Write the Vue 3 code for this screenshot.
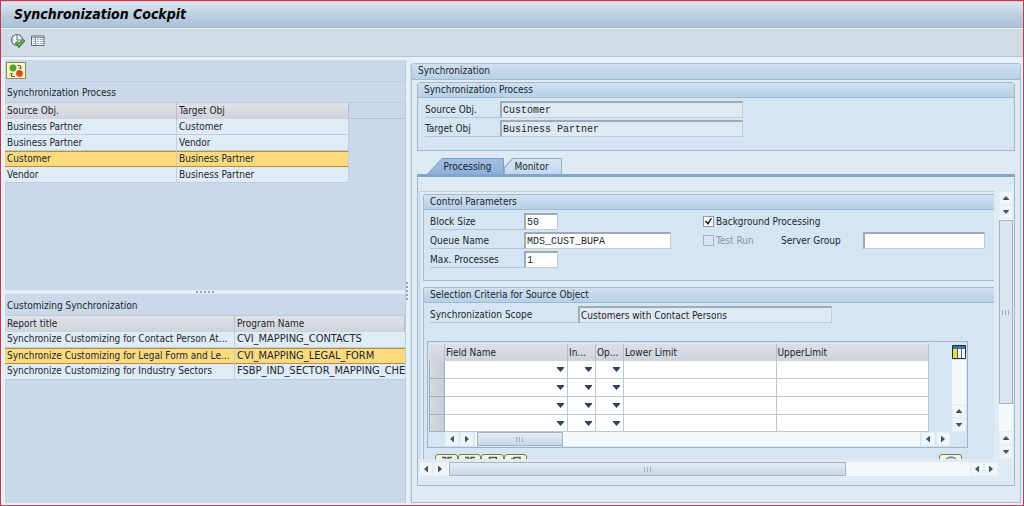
<script setup>
import { ref } from 'vue'

const objects = [
  ['Business Partner', 'Customer'],
  ['Business Partner', 'Vendor'],
  ['Customer', 'Business Partner'],
  ['Vendor', 'Business Partner'],
]
const reports = [
  ['Synchronize Customizing for Contact Person At...', 'CVI_MAPPING_CONTACTS'],
  ['Synchronize Customizing for Legal Form and Le...', 'CVI_MAPPING_LEGAL_FORM'],
  ['Synchronize Customizing for Industry Sectors', 'FSBP_IND_SECTOR_MAPPING_CHEC'],
]
const selectedObject = ref(2)
const selectedReport = ref(1)
const tab = ref('Processing')
const source = ref('Customer')
const target = ref('Business Partner')
const blockSize = ref('50')
const queue = ref('MDS_CUST_BUPA')
const maxProc = ref('1')
const background = ref(true)
const testRun = ref(false)
const serverGroup = ref('')
const scope = ref('Customers with Contact Persons')
</script>

<template>
  <div class="app">
    <header class="titlebar"><h1>Synchronization Cockpit</h1></header>
    <div class="toolbar">
      <button class="tool" aria-label="Execute">
        <svg width="16" height="16" viewBox="0 0 16 16">
          <circle cx="7" cy="7" r="5.5" fill="#f4f8fa" stroke="#5d6a74" stroke-width="1.2" />
          <path d="M7 2v5h4M7 11v1M2.500 7h1" fill="none" stroke="#5d6a74" />
          <path d="M6 9l3 3.500L14 6.500" fill="none" stroke="#3f7f34" stroke-width="3.600" />
          <path d="M6.500 9.500L9 12l4.500-5" fill="none" stroke="#79b866" stroke-width="1.600" />
        </svg>
      </button>
      <button class="tool" aria-label="Layout">
        <svg width="14" height="12" viewBox="0 0 14 12">
          <path d="M.5 1h12.500v9.500H.5z" fill="#eef4f8" stroke="#5f6c76" />
          <path d="M1 2.500h12" stroke="#8296a6" />
          <path d="M4.500 2v8" stroke="#8a98a4" />
          <path d="M2 4.500h1.500M2 6.500h1.500M2 8.500h1.500M6 4.500h2M9 4.500h3M6 6.500h2M9 6.500h3M6 8.500h2M9 8.500h3" stroke="#9fb0bd" />
        </svg>
      </button>
    </div>

    <main class="body">
      <div class="left">
        <section class="pane upper">
          <div class="panebar">
            <button class="switch" aria-label="Switch direction">
              <svg width="17" height="14" viewBox="0 0 17 14">
                <circle cx="5" cy="4" r="3.400" fill="#5aa02c" />
                <circle cx="11.500" cy="9.500" r="3.400" fill="#d2551e" />
                <path d="M9.500 1.500h3v3M11 3.500l1.500 1.500L14 3.500M7 12.500H3.500v-3M2 10.500L3.500 9 5 10.500" fill="none" stroke="#555" />
              </svg>
            </button>
          </div>
          <h2 class="caption">Synchronization Process</h2>
          <div class="headband">
            <table class="list objects">
              <thead><tr><th>Source Obj.</th><th>Target Obj</th></tr></thead>
              <tbody>
                <tr v-for="(r, i) in objects" :key="i" :class="{ on: i === selectedObject }" @click="selectedObject = i">
                  <td v-for="(c, k) in r" :key="k">{{ c }}</td>
                </tr>
              </tbody>
            </table>
          </div>
        </section>
        <div class="split-h"><i v-for="n in 5" :key="n"></i></div>
        <section class="pane lower">
          <h2 class="caption">Customizing Synchronization</h2>
          <table class="list reports">
            <thead><tr><th>Report title</th><th>Program Name</th></tr></thead>
            <tbody>
              <tr v-for="(r, i) in reports" :key="i" :class="{ on: i === selectedReport }" @click="selectedReport = i">
                <td>{{ r[0] }}</td><td class="clip">{{ r[1] }}</td>
              </tr>
            </tbody>
          </table>
        </section>
      </div>

      <div class="split-v"><i v-for="n in 5" :key="n"></i></div>

      <section class="group outer">
        <h2 class="ghead">Synchronization</h2>
        <div class="outer-body">
          <section class="group process">
            <h3 class="ghead">Synchronization Process</h3>
            <div class="fields">
              <label class="lbl" for="src">Source Obj.</label>
              <input id="src" v-model="source" class="box ro mono" readonly />
              <label class="lbl" for="tgt">Target Obj</label>
              <input id="tgt" v-model="target" class="box ro mono" readonly />
            </div>
          </section>

          <div class="tabs" role="tablist">
            <button
              v-for="t in ['Processing', 'Monitor']" :key="t" role="tab" class="tab"
              :class="{ active: tab === t }" :aria-selected="tab === t" @click="tab = t"
            ><span>{{ t }}</span></button>
          </div>

          <div class="tabpanel">
            <div class="view">
              <section class="group open params">
                <h3 class="ghead">Control Parameters</h3>
                <div class="param-grid">
                  <div class="fields narrow">
                    <label class="lbl" for="bs">Block Size</label>
                    <input id="bs" v-model="blockSize" class="box mono short" />
                    <label class="lbl" for="qn">Queue Name</label>
                    <input id="qn" v-model="queue" class="box mono" />
                    <label class="lbl" for="mp">Max. Processes</label>
                    <input id="mp" v-model="maxProc" class="box mono short" />
                  </div>
                  <div class="options">
                    <label class="check"><input v-model="background" type="checkbox" /><span>Background Processing</span></label>
                    <div class="optrow">
                      <label class="check off"><input v-model="testRun" type="checkbox" disabled /><span>Test Run</span></label>
                      <label class="plain" for="sg">Server Group</label>
                      <input id="sg" v-model="serverGroup" class="box mono" />
                    </div>
                  </div>
                </div>
              </section>

              <section class="group open criteria">
                <h3 class="ghead">Selection Criteria for Source Object</h3>
                <div class="fields wide">
                  <label class="lbl" for="sc">Synchronization Scope</label>
                  <input id="sc" v-model="scope" class="box ro" readonly />
                </div>

                <div class="gridbox">
                  <div class="gridtop">
                    <table class="grid">
                      <colgroup><col class="c0" /><col class="c1" /><col class="c2" /><col class="c2" /><col /><col /></colgroup>
                      <thead>
                        <tr><th></th><th>Field Name</th><th>In...</th><th>Op...</th><th>Lower Limit</th><th>UpperLimit</th></tr>
                      </thead>
                      <tbody>
                        <tr v-for="r in 4" :key="r">
                          <td class="sel"></td>
                          <td v-for="c in ['Field name', 'Include', 'Option']" :key="c" class="dd">
                            <select :aria-label="c"><option></option></select>
                          </td>
                          <td><input aria-label="Lower limit" /></td>
                          <td><input aria-label="Upper limit" /></td>
                        </tr>
                      </tbody>
                    </table>
                    <div class="vbar inner">
                      <button class="config" aria-label="Configure columns">
                        <svg width="14" height="14" viewBox="0 0 14 14">
                          <path d="M.5.5h13v13H.5z" fill="#fff" stroke="#1d2b3c" />
                          <path d="M1 1h12v3H1z" fill="#3c6fb0" />
                          <path d="M1 4h4v9H1z" fill="#f3df25" />
                          <path d="M5.500 3v10M9.500 3v10" stroke="#3c5f90" />
                        </svg>
                      </button>
                      <div class="track"></div>
                      <button class="arrow up" aria-label="Up"></button>
                      <button class="arrow down" aria-label="Down"></button>
                    </div>
                  </div>
                  <div class="hbar inner">
                    <button class="arrow left-a" aria-label="Left"></button>
                    <button class="arrow right-a" aria-label="Right"></button>
                    <div class="track"><div class="thumb"><b></b></div></div>
                    <button class="arrow left-a" aria-label="Left"></button>
                    <button class="arrow right-a" aria-label="Right"></button>
                  </div>
                </div>

                <div class="actions">
                  <button aria-label="Select all"><svg width="12" height="8" viewBox="0 0 12 8"><path d="M1 2.500h3.500V7M7 7V2.500h4" fill="none" stroke="#555" stroke-width="1.500" /></svg></button>
                  <button aria-label="Deselect all"><svg width="12" height="8" viewBox="0 0 12 8"><path d="M1 2.500h3.500V7M7 7V2.500h4" fill="none" stroke="#555" stroke-width="1.500" /></svg></button>
                  <button aria-label="Insert row"><svg width="12" height="8" viewBox="0 0 12 8"><path d="M2.500 8V2.500h7V8" fill="none" stroke="#555" stroke-width="1.500" /></svg></button>
                  <button aria-label="Delete row"><svg width="12" height="8" viewBox="0 0 12 8"><path d="M1 4h3V2.500h6V8" fill="none" stroke="#555" stroke-width="1.500" /></svg></button>
                  <button class="last" aria-label="Check"><svg width="14" height="8" viewBox="0 0 14 8"><ellipse cx="7" cy="6" rx="6" ry="4" fill="#b9d3ee" stroke="#3d6a96" /></svg></button>
                </div>
              </section>
            </div>

            <div class="vbar main-v">
              <button class="arrow up" aria-label="Up"></button>
              <button class="arrow down" aria-label="Down"></button>
              <div class="track"><div class="thumb"><b></b></div></div>
              <button class="arrow up" aria-label="Up"></button>
              <button class="arrow down" aria-label="Down"></button>
            </div>
            <div class="hbar main-h">
              <button class="arrow left-a" aria-label="Left"></button>
              <button class="arrow right-a" aria-label="Right"></button>
              <div class="track"><div class="thumb"><b></b></div></div>
              <button class="arrow left-a" aria-label="Left"></button>
              <button class="arrow right-a" aria-label="Right"></button>
            </div>
          </div>
        </div>
      </section>
    </main>
  </div>
</template>

<style>
body { background: #e6f0f9; }
</style>

<style scoped>
* { box-sizing: border-box; }
.app {
  min-height: 100vh;
  display: flex;
  flex-direction: column;
  border: 1px solid #c03a50;
  background: #e6f0f9;
  color: #1c2530;
  font: 10px/14px "DejaVu Sans Condensed", "DejaVu Sans", sans-serif;
}
h1, h2, h3 { margin: 0; font-weight: normal; font-size: inherit; }
button, input, select { font: inherit; color: inherit; margin: 0; padding: 0; border: 0; border-radius: 0; background: none; min-width: 0; }
.titlebar {
  height: 27px;
  padding: 0 13px;
  border-top: 1px solid #ecc0c8;
  border-bottom: 1px solid #a6bac8;
  background: linear-gradient(#dbe6f3, #bdd0df 50%, #aac1da);
}
.titlebar h1 { color: #000; font: italic bold 14px/24px "DejaVu Sans Condensed", "DejaVu Sans", sans-serif; }
.toolbar {
  height: 29px;
  display: flex;
  align-items: center;
  gap: 4px;
  padding: 0 9px 4px;
  border-top: 1px solid #e8f0f6;
  border-bottom: 1px solid #b8c5cd;
  background: #cfdce6;
}
.tool { display: grid; place-items: center; width: 16px; height: 16px; }

.body { flex: 1; display: grid; grid-template-columns: 400fr 6px 610fr; padding: 3px 2px 2px 4px; }
.body > * { min-width: 0; }
.left { display: flex; flex-direction: column; min-height: 0; }
.pane { background: #c9d9e9; overflow: hidden; }
.upper { flex: 232; }
.lower { flex: 210; padding-top: 1px; }
.panebar { height: 22px; padding: 2px 1px; border-bottom: 1px solid #b9cbdd; }
.switch { display: grid; place-items: center; width: 20px; height: 17px; border: 1px solid #8d8a55; background: #fdf5c4; }
.caption { height: 20px; padding: 3px 2px; line-height: 15px; }
.headband { background: linear-gradient(#b3c3d4, #b3c3d4) 0 15px / 100% 1px no-repeat; border-top: 1px solid #b9cbdd; }
.list { border-collapse: separate; border-spacing: 0; table-layout: fixed; }
.objects { width: 86%; }
.reports { width: 100%; border-top: 1px solid #b9cbdd; }
.reports th:first-child { width: 230px; }
.list th { height: 16px; padding: 0 2px; text-align: left; font-weight: normal; background: linear-gradient(#dfe2e7, #cfd3d9); border-right: 1px solid #b6bec8; }
.list td { height: 16px; padding: 0 2px; line-height: 14px; background: #dfebf6; border-right: 1px solid #c0cfde; border-bottom: 1px solid #bccddd; overflow: hidden; white-space: nowrap; }
.list td.clip { font-size: 11px; padding-right: 0; border-right: 0; }
.list .on td { background: #fcda7e; border-top: 1px solid #c08a3c; border-bottom-color: #c08a3c; }
.split-h { height: 4px; display: flex; justify-content: center; align-items: center; gap: 2px; border-top: 1px solid #e1ebf5; border-bottom: 1px solid #e1ebf5; }
.split-h i, .split-v i { width: 2px; height: 2px; background: #94a3b4; }
.split-v { display: flex; flex-direction: column; align-items: flex-start; justify-content: center; gap: 2px; border-left: 1px solid #b9cbdd; border-right: 1px solid #d2e0ed; padding-top: 18px; }

.group { border: 1px solid #a3b9ce; border-radius: 3px 3px 0 0; background: #d4e5f3; }
.ghead { height: 15px; padding: 0 6px; line-height: 14px; background: linear-gradient(#d0e0f0, #b7cfe6); border-bottom: 1px solid #a3bace; }
.outer { display: flex; flex-direction: column; margin-top: 3px; background: #deebf5; border-color: #aabccd; }
.outer > .ghead { height: 16px; }
.outer-body { flex: 1; display: flex; flex-direction: column; padding: 2px 5px 16px; }
.process { height: 69px; }
.fields { display: grid; grid-template-columns: 75px 243px; row-gap: 2px; padding: 3px 7px; }
.lbl { height: 17px; line-height: 17px; border-bottom: 1px solid #b4c6d6; white-space: nowrap; }
.box { width: 100%; height: 17px; padding: 0 1px; line-height: 13px; border: 1px solid #9eabb6; border-top-width: 2px; border-left-width: 2px; border-right-color: #c2ccd4; border-bottom-color: #c2ccd4; background: #fff; }
.ro { background: #dfe9f2; }
.mono { font-family: "Liberation Mono", monospace; font-size: 10px; }
.short { width: 34px; }

.tabs { display: flex; margin-top: 7px; padding-left: 10px; }
.tab { position: relative; height: 16px; width: 58px; background: #94afca; clip-path: polygon(0 9px, 8px 0, 100% 0, 100% 100%, 0 100%); }
.tab::before { content: ""; position: absolute; inset: 1px 1px 0 1px; background: linear-gradient(#d7e6f4, #c2d8ec); clip-path: polygon(0 9px, 8px 0, 100% 0, 100% 100%, 0 100%); }
.tab.active { width: 77px; background: #7a9fc8; clip-path: polygon(0 100%, 15px 0, 100% 0, 100% 100%); }
.tab.active::before { background: linear-gradient(#a4c0e2, #8cb0dc); clip-path: polygon(0 100%, 14px 0, 100% 0, 100% 100%); }
.tab span { position: relative; display: block; padding-right: 3px; line-height: 18px; }
.tab.active span { padding: 0 0 0 4px; }

.tabpanel {
  flex: 1;
  display: grid;
  grid-template-columns: 1fr 14px;
  grid-template-rows: 1fr 14px;
  gap: 3px 5px;
  padding: 14px 1px 9px 1px;
  border: 1px solid #a3b9ce;
  border-top: 3px solid #84a5c9;
  background: #deebf5;
}
.view { min-width: 0; overflow: hidden; border-top: 1px solid #bccfdf; border-left: 1px solid #bccfdf; padding: 2px 0 0 3px; }
.open { border-right: 0; border-radius: 3px 0 0 0; }
.params { height: 87px; margin-bottom: 6px; }
.param-grid { display: flex; }
.narrow { grid-template-columns: 94px 147px; column-gap: 0; row-gap: 2px; padding: 3px 0 0 6px; }
.options { flex: 1; display: flex; flex-direction: column; gap: 2px; padding: 3px 9px 0 32px; }
.optrow { display: flex; align-items: center; }
.optrow .box { flex: 1; }
.plain { width: 82px; }
.check { display: flex; align-items: center; height: 17px; gap: 2px; }
.check.off { color: #8796a3; width: 78px; }
.check input { appearance: none; width: 11px; height: 11px; border: 1px solid #8b98a3; background: #fff; position: relative; }
.check input:disabled { background: #d9e6f1; border-color: #a5b3bf; }
.check input:checked::before { content: ""; position: absolute; inset: 1px; background: #111; clip-path: polygon(0 45%, 15% 35%, 40% 65%, 85% 0, 100% 10%, 42% 100%); }
.criteria { border-bottom: 0; }
.wide { grid-template-columns: 148px 254px; padding: 3px 5px 0 6px; }

.gridbox { margin: 18px 26px 0 3px; padding: 1px; border: 1px solid #9db3c8; }
.gridtop { display: flex; justify-content: space-between; }
.grid { width: 500px; flex: 0 1 500px; border-collapse: separate; border-spacing: 0; table-layout: fixed; }
.c0 { width: 16px; }
.c1 { width: 123px; }
.c2 { width: 28px; }
.grid th { height: 18px; padding: 0 1px; text-align: left; font-weight: normal; white-space: nowrap; overflow: hidden; background: linear-gradient(#dcdfe5, #ced3da); border-right: 1px solid #b5c0cc; border-top: 1px solid #dfe5ec; }
.grid td { position: relative; height: 18px; padding: 0; background: #fff; border-right: 1px solid #b9c8d6; border-bottom: 1px solid #b9c8d6; }
.grid tr:last-child td { height: 17px; }
.grid td.sel { background: linear-gradient(90deg, #d6dae1, #c6ccd5); border: 1px solid #a2adba; border-top: 0; }
.grid input, .grid select { display: block; width: 100%; height: 16px; appearance: none; }
.dd::after { content: ""; position: absolute; right: 3px; top: 6px; width: 7px; height: 5px; background: #2f3f5c; clip-path: polygon(0 0, 100% 0, 100% 1px, 50% 100%, 0 1px); }

.vbar, .hbar { display: flex; min-width: 0; }
.vbar { flex-direction: column; width: 14px; }
.hbar { height: 14px; }
.track { flex: 1; background: #f6f9fc; display: flex; }
.vbar .track { flex-direction: column; }
.arrow { display: grid; place-items: center; flex: none; width: 14px; height: 14px; background: #f0f5fa; border: 1px solid #e4edf5; }
.arrow::before { content: ""; background: #46535f; width: 7px; height: 4px; clip-path: polygon(50% 0, 100% 100%, 0 100%); }
.down::before { clip-path: polygon(0 0, 100% 0, 50% 100%); }
.left-a::before { width: 4px; height: 7px; clip-path: polygon(100% 0, 100% 100%, 0 50%); }
.right-a::before { width: 4px; height: 7px; clip-path: polygon(0 0, 100% 50%, 0 100%); }
.thumb { display: grid; place-items: center; border: 1px solid #a5b4c3; background: linear-gradient(#e4ecf5, #c8d6e5); }
.vbar .thumb { background: #d9e5f0; }
.thumb b { width: 8px; height: 5px; background: repeating-linear-gradient(90deg, #9fb0c1 0 1px, transparent 1px 3px); }
.main-v .thumb { flex: 0 0 87%; margin-top: 1px; }
.main-h .thumb { flex: 0 0 76%; margin-left: 2px; }
.main-h { margin-right: -4px; }
.inner.hbar { margin: 0 16px 0 16px; gap: 1px; }
.inner.hbar .thumb { flex: 0 0 86px; margin-left: 2px; }
.config { display: grid; place-items: center; height: 17px; width: 14px; }

.actions { display: flex; height: 5px; margin: 6px 32px 0 11px; overflow: hidden; }
.actions button { display: grid; justify-items: center; align-items: start; width: 23px; height: 18px; flex: none; border: 1px solid #77795c; border-radius: 3px; background: #f5f5da; }
.actions .last { margin-left: auto; }
</style>
